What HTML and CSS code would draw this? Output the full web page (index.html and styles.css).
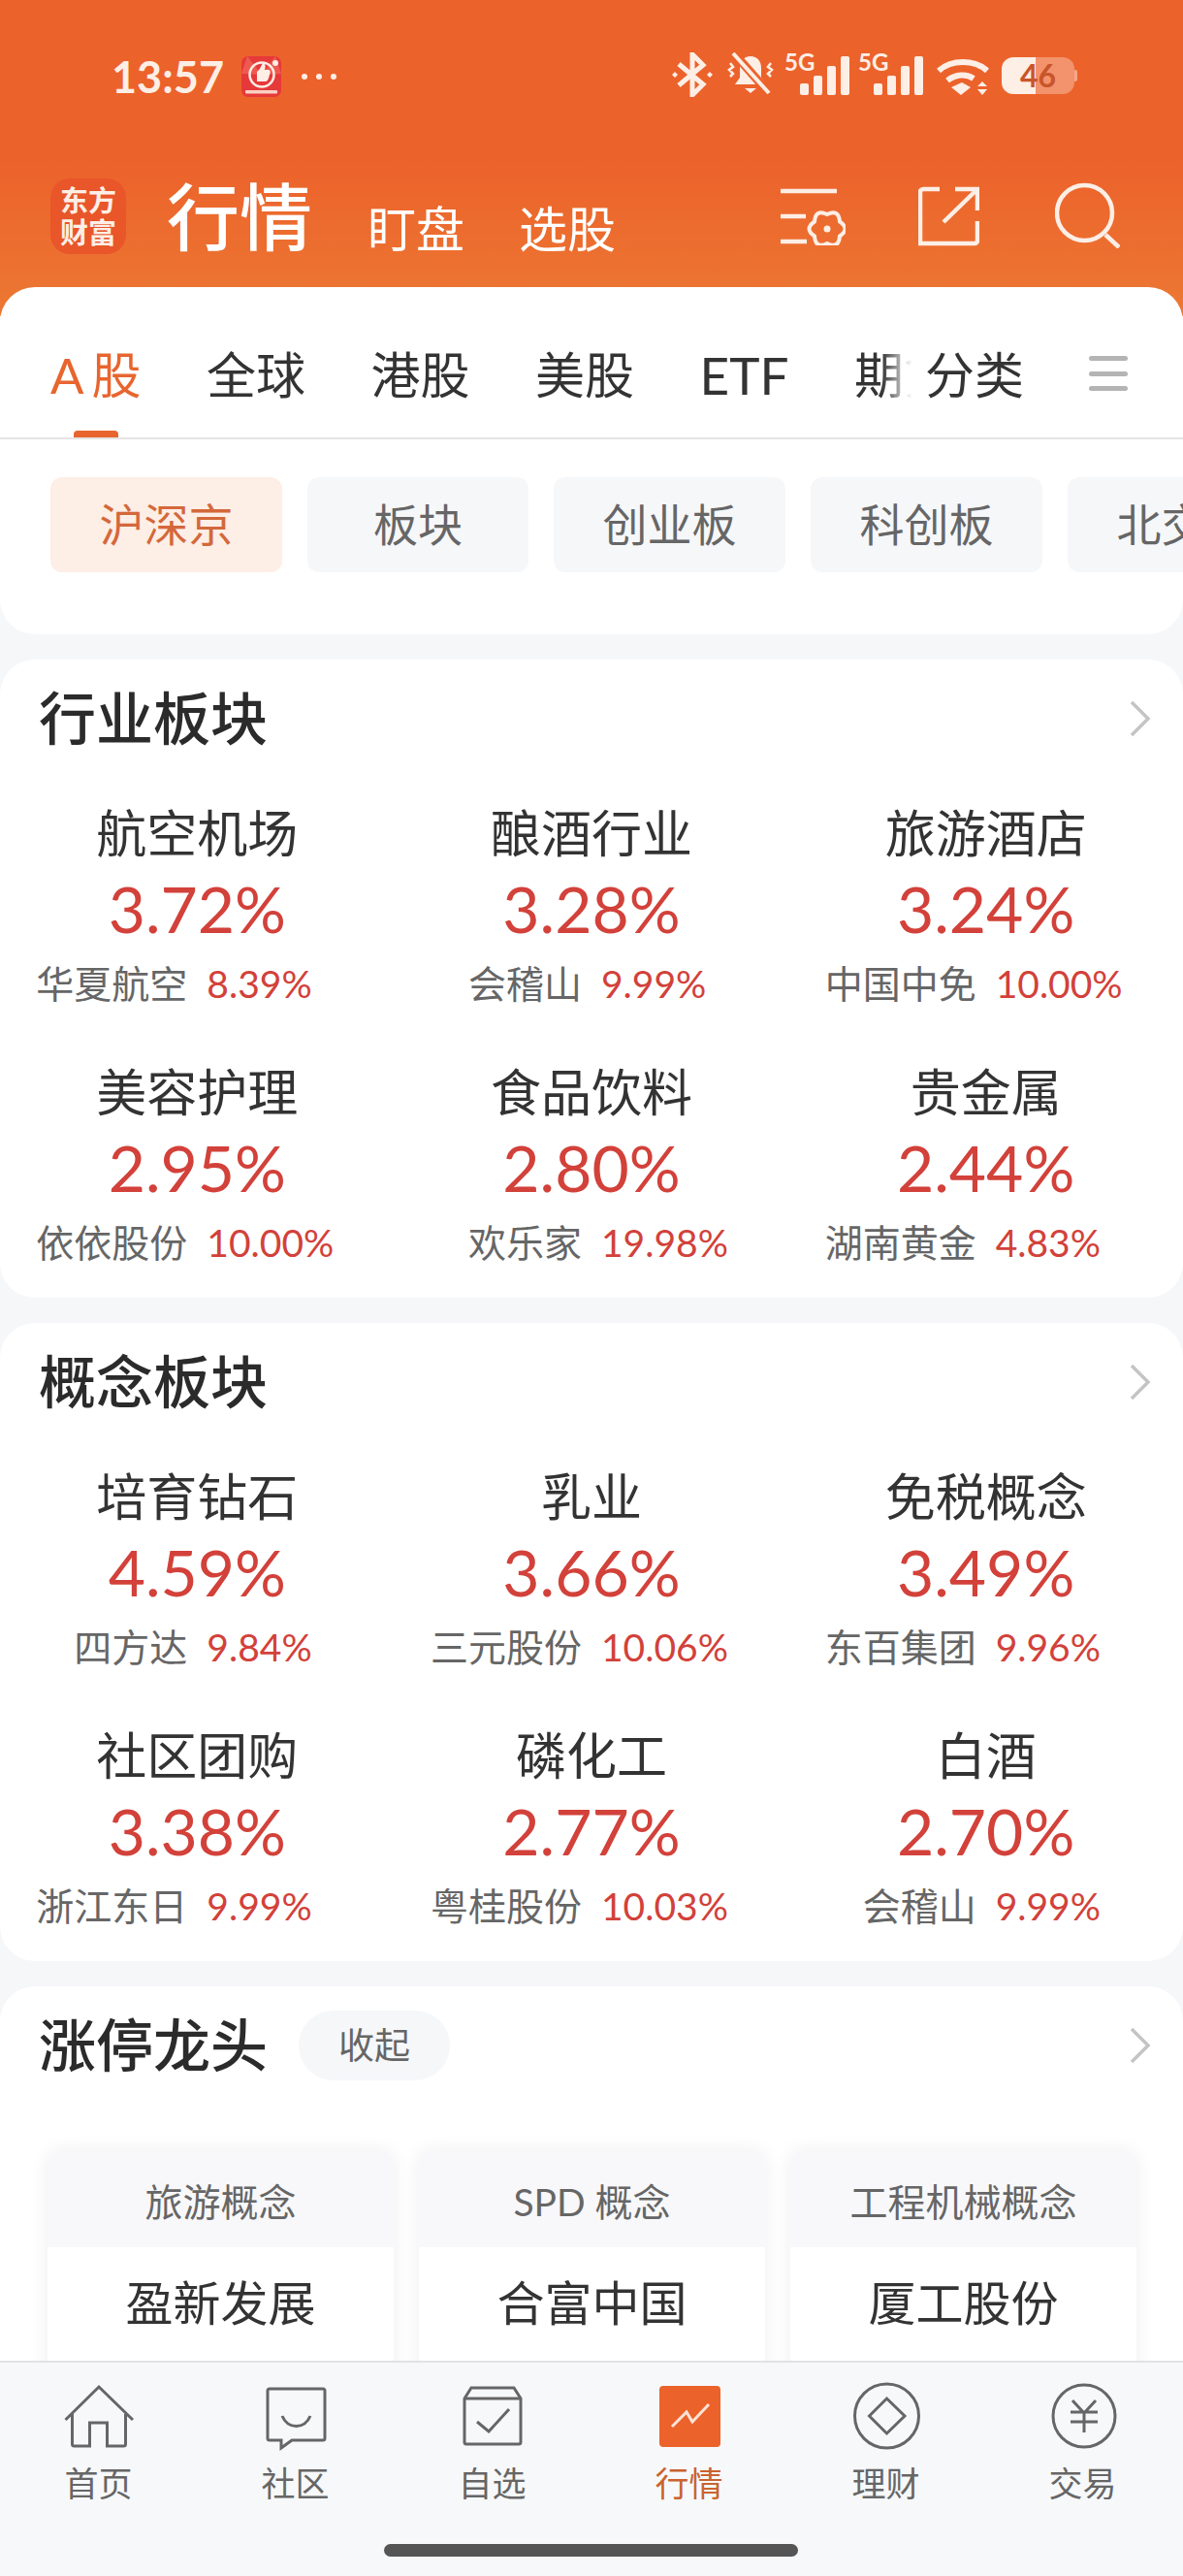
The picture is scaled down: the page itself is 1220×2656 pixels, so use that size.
FILE: index.html
```html
<!DOCTYPE html>
<html>
<head>
    <title>行情</title>
    <link rel="stylesheet" href="styles.css">
</head>
<body>
<div class="page">
    <div class="top">
        <div class="status">
            <span class="time">13:57</span>
            <svg class="app-icon" viewBox="0 0 41 42">
                <rect width="41" height="42" rx="7" fill="#e5393a"/>
                <path d="M0 18L21 19 6 0zM41 18L21 19 35 0z" fill="#ee5a50"/>
                <circle cx="21" cy="19" r="12.500" fill="none" stroke="#fdeee6" stroke-width="2.500"/>
                <path d="M16 16c3-2 4-6 6-9 3 0 3 4 2 7h4c2 0 2 3 1 5-1 4-2 7-4 7h-9z" fill="#fdeee6"/>
                <circle cx="35" cy="7" r="3" fill="#fdeee6"/>
                <rect x="4" y="35" width="33" height="3.500" rx="1" fill="#fbd0c4"/>
            </svg>
            <div class="dots"><i></i><i></i><i></i></div>
            <div class="status-right">
                <svg class="ic-bt" viewBox="0 0 42 46" fill="none" stroke="#fdeee6" stroke-width="5">
                    <path d="M7 12l25 21-11 11V2l11 11L7 34"/>
                    <path d="M0 23l3-3 3 3-3 3zM36 23l3-3 3 3-3 3z" fill="#fdeee6" stroke="none"/>
                </svg>
                <svg class="ic-bell" viewBox="0 0 52 44">
                    <path d="M26 4c-7 0-11 5-11 12v10l-5 7h32l-5-7V16c0-7-4-12-11-12z" fill="#fdeee6"/>
                    <path d="M20 37h12l-6 5z" fill="#fdeee6"/>
                    <path d="M5 11l3 4-4 3 4 4-3 3M47 11l-3 4 4 3-4 4 3 3" fill="none" stroke="#fdeee6" stroke-width="2.500"/>
                    <path d="M8 0l38 43" stroke="#ec622b" stroke-width="9"/>
                    <path d="M8 1l37 41" stroke="#fdeee6" stroke-width="4"/>
                </svg>
                <div class="signal">
                    <span class="five-g">5G</span>
                    <div class="bars"><i class="b1"></i><i class="b2"></i><i class="b3"></i><i class="b4"></i></div>
                </div>
                <div class="signal">
                    <span class="five-g">5G</span>
                    <div class="bars"><i class="b1"></i><i class="b2"></i><i class="b3"></i><i class="b4"></i></div>
                </div>
                <svg class="ic-wifi" viewBox="0 0 54 38" fill="none" stroke="#fdeee6" stroke-width="6">
                    <path d="M2 13c13-12 37-12 50 0M11 23c9-7 20-7 27-2"/>
                    <path d="M15 30l11-5 9 5-10 8z" fill="#fdeee6" stroke="none"/>
                    <path d="M42 29l5-5 5 5zM42 32l5 6 5-6z" fill="#fdeee6" stroke="none"/>
                </svg>
                <div class="battery">46</div>
            </div>
        </div>
        <div class="head">
            <div class="logo"><span>东方</span><span>财富</span></div>
            <span class="head-title">行情</span>
            <span class="head-link">盯盘</span>
            <span class="head-link">选股</span>
            <div class="head-icons">
                <svg class="ic-list" viewBox="0 0 67 60" fill="none" stroke="#fdeee6" stroke-width="4.500">
                    <path d="M0 4h58M0 30h26M0 56h27"/>
                    <path d="M48 28Q60 22.200 61 35.500 72 43 61 50.500 60 63.800 48 58 36 63.800 35 50.500 24 43 35 35.500 36 22.200 48 28z" stroke-width="4"/>
                    <circle cx="48" cy="43" r="3.500" fill="#fdeee6" stroke="none"/>
                </svg>
                <svg class="ic-share" viewBox="0 0 63 62" fill="none" stroke="#fdeee6" stroke-width="4.500">
                    <path d="M22 3H5a3 3 0 0 0-3 3v53h56a3 3 0 0 0 3-3V36M61 25V3H38M61 3L26 37"/>
                </svg>
                <svg class="ic-search" viewBox="0 0 67 68" fill="none" stroke="#fdeee6" stroke-width="4.500">
                    <circle cx="30.500" cy="31.500" r="28.500"/>
                    <path d="M52 54l14 13"/>
                </svg>
            </div>
        </div>
    </div>

    <div class="content">
        <div class="sheet">
            <div class="tabs">
                <div class="tab-list">
                    <span class="tab tab-active"><span class="tab-a">A</span>股</span>
                    <span class="tab">全球</span>
                    <span class="tab">港股</span>
                    <span class="tab">美股</span>
                    <span class="tab tab-latin">ETF</span>
                    <span class="tab">期货</span>
                </div>
                <div class="tab-side">
                    <span class="tab">分类</span>
                    <div class="burger"><i></i><i></i><i></i></div>
                </div>
            </div>
            <div class="chips">
                <span class="chip chip-active">沪深京</span>
                <span class="chip">板块</span>
                <span class="chip">创业板</span>
                <span class="chip">科创板</span>
                <span class="chip">北交所</span>
            </div>
        </div>

        <div class="card">
            <div class="card-title">
                <h2>行业板块</h2>
                <svg class="chevron" viewBox="0 0 22 38"><path d="M2 2l17 17L2 36" /></svg>
            </div>
            <div class="grid">
                <div class="cell"><div class="name">航空机场</div><div class="pct">3.72%</div><div class="sub"><span class="stock">华夏航空</span><span class="rate">8.39%</span></div></div>
                <div class="cell"><div class="name">酿酒行业</div><div class="pct">3.28%</div><div class="sub"><span class="stock">会稽山</span><span class="rate">9.99%</span></div></div>
                <div class="cell"><div class="name">旅游酒店</div><div class="pct">3.24%</div><div class="sub"><span class="stock">中国中免</span><span class="rate">10.00%</span></div></div>
                <div class="cell"><div class="name">美容护理</div><div class="pct">2.95%</div><div class="sub"><span class="stock">依依股份</span><span class="rate">10.00%</span></div></div>
                <div class="cell"><div class="name">食品饮料</div><div class="pct">2.80%</div><div class="sub"><span class="stock">欢乐家</span><span class="rate">19.98%</span></div></div>
                <div class="cell"><div class="name">贵金属</div><div class="pct">2.44%</div><div class="sub"><span class="stock">湖南黄金</span><span class="rate">4.83%</span></div></div>
            </div>
        </div>

        <div class="card">
            <div class="card-title">
                <h2>概念板块</h2>
                <svg class="chevron" viewBox="0 0 22 38"><path d="M2 2l17 17L2 36" /></svg>
            </div>
            <div class="grid">
                <div class="cell"><div class="name">培育钻石</div><div class="pct">4.59%</div><div class="sub"><span class="stock">四方达</span><span class="rate">9.84%</span></div></div>
                <div class="cell"><div class="name">乳业</div><div class="pct">3.66%</div><div class="sub"><span class="stock">三元股份</span><span class="rate">10.06%</span></div></div>
                <div class="cell"><div class="name">免税概念</div><div class="pct">3.49%</div><div class="sub"><span class="stock">东百集团</span><span class="rate">9.96%</span></div></div>
                <div class="cell"><div class="name">社区团购</div><div class="pct">3.38%</div><div class="sub"><span class="stock">浙江东日</span><span class="rate">9.99%</span></div></div>
                <div class="cell"><div class="name">磷化工</div><div class="pct">2.77%</div><div class="sub"><span class="stock">粤桂股份</span><span class="rate">10.03%</span></div></div>
                <div class="cell"><div class="name">白酒</div><div class="pct">2.70%</div><div class="sub"><span class="stock">会稽山</span><span class="rate">9.99%</span></div></div>
            </div>
        </div>

        <div class="card">
            <div class="card-title">
                <h2>涨停龙头</h2>
                <span class="pill">收起</span>
                <svg class="chevron" viewBox="0 0 22 38"><path d="M2 2l17 17L2 36" /></svg>
            </div>
            <div class="leaders">
                <div class="leader"><div class="leader-head">旅游概念</div><div class="leader-name">盈新发展</div></div>
                <div class="leader"><div class="leader-head">SPD 概念</div><div class="leader-name">合富中国</div></div>
                <div class="leader"><div class="leader-head">工程机械概念</div><div class="leader-name">厦工股份</div></div>
            </div>
        </div>
    </div>

    <div class="nav">
        <div class="nav-items">
            <div class="nav-item">
                <svg class="nav-icon" viewBox="1.500 0 70 64" fill="none" stroke="#666" stroke-width="3">
                    <path d="M2 37L36.500 3l35 34"/>
                    <path d="M9 31v31a2 2 0 0 0 2 2h16V40h18v24h17a2 2 0 0 0 2-2V31"/>
                </svg>
                <span>首页</span>
            </div>
            <div class="nav-item">
                <svg class="nav-icon" viewBox="0 0 70 64" fill="none" stroke="#666" stroke-width="3">
                    <path d="M8 5h55a2 2 0 0 1 2 2v49a2 2 0 0 1-2 2H31l-11 8v-8H8a2 2 0 0 1-2-2V7a2 2 0 0 1 2-2z"/>
                    <path d="M21 33c6 14 23 14 29 0"/>
                </svg>
                <span>社区</span>
            </div>
            <div class="nav-item">
                <svg class="nav-icon" viewBox="0 0 70 64" fill="none" stroke="#666" stroke-width="3">
                    <path d="M6 15l7-11h44l7 11v45a2 2 0 0 1-2 2H8a2 2 0 0 1-2-2z"/>
                    <path d="M6 15h58M19 39l12 10 21-23"/>
                </svg>
                <span>自选</span>
            </div>
            <div class="nav-item nav-active">
                <svg class="nav-icon" viewBox="0 0 70 64">
                    <rect x="4" y="2" width="63" height="63" rx="4" fill="#ec622b"/>
                    <path d="M17 44l15-15 6 10 17-18" fill="none" stroke="#fde3d6" stroke-width="3"/>
                </svg>
                <span>行情</span>
            </div>
            <div class="nav-item">
                <svg class="nav-icon" viewBox="0 0 70 64" fill="none" stroke="#666" stroke-width="3">
                    <circle cx="35.500" cy="33" r="33"/>
                    <path d="M35.500 15L54 33 35.500 51 17.500 33z"/>
                </svg>
                <span>理财</span>
            </div>
            <div class="nav-item">
                <svg class="nav-icon" viewBox="0 0 70 64" fill="none" stroke="#666" stroke-width="3">
                    <circle cx="36" cy="33" r="32"/>
                    <path d="M24 17l12 13 12-13M22 29h28M22 39h28M36 30v20"/>
                </svg>
                <span>交易</span>
            </div>
        </div>
        <div class="home-bar"></div>
    </div>
</div>
</body>
</html>
```

FILE: styles.css
```css
* {
    box-sizing: border-box;
}

body {
    margin: 0;
    font-family: Lato, "Noto Sans CJK SC", sans-serif;
    background-color: #f6f7f9;
    color: #333;
}

.page {
    width: 1220px;
    height: 2656px;
    display: flex;
    flex-direction: column;
    overflow: hidden;
}

.top {
    height: 326px;
    margin-bottom: -30px;
    flex-shrink: 0;
    background: linear-gradient(180deg, #ec622b 0%, #ec622b 50%, #ec7833 100%);
    color: #fdeee6;
}

/* status bar */
.status {
    height: 160px;
    padding: 51px 0 0 115px;
    display: flex;
    align-items: flex-start;
}

.time {
    font-size: 45px;
    line-height: 56px;
    font-weight: 700;
    width: 134px;
}

.app-icon {
    width: 41px;
    height: 42px;
    margin-top: 7px;
}

.dots {
    display: flex;
    gap: 9px;
    margin: 25px 0 0 21px;
}

.dots i {
    width: 6px;
    height: 6px;
    border-radius: 50%;
    background-color: #fdeee6;
}

.status-right {
    margin-left: auto;
    width: 527px;
    height: 50px;
    display: flex;
    align-items: flex-start;
}

.ic-bt {
    width: 42px;
    height: 46px;
    margin-top: 3px;
}

.ic-bell {
    width: 52px;
    height: 44px;
    margin: 3px 0 0 13px;
}

.signal {
    width: 67px;
    height: 45px;
    margin-left: 9px;
    position: relative;
}

.five-g {
    position: absolute;
    left: 0;
    top: 3px;
    font-size: 24px;
    line-height: 20px;
    font-weight: 700;
}

.bars {
    position: absolute;
    right: 0;
    bottom: -2px;
    display: flex;
    gap: 5px;
    align-items: flex-end;
}

.bars i {
    width: 9px;
    background-color: #fdeee6;
    border-radius: 2px;
}

.b1 { height: 12px; }
.b2 { height: 20px; }
.b3 { height: 30px; }
.b4 { height: 40px; }

.ic-wifi {
    width: 54px;
    height: 38px;
    margin: 9px 0 0 14px;
}

.battery {
    position: relative;
    width: 75px;
    height: 38px;
    margin: 8px 0 0 13px;
    background: linear-gradient(90deg, #fdeee6 35px, rgba(253, 238, 230, 0.35) 35px);
    border-radius: 12px;
    text-align: center;
    color: #c9552a;
    font-size: 32px;
    line-height: 38px;
    font-weight: 700;
}

.battery::after {
    content: "";
    position: absolute;
    right: -3px;
    top: 13px;
    width: 3px;
    height: 12px;
    border-radius: 0 2px 2px 0;
    background-color: rgba(253, 238, 230, 0.5);
}

/* header row */
.head {
    height: 110px;
    padding: 24px 65px 0 52px;
    display: flex;
    align-items: flex-start;
    color: #fff;
}

.logo {
    width: 78px;
    height: 78px;
    border-radius: 20px;
    background-color: #e8562a;
    display: flex;
    flex-direction: column;
    align-items: center;
    justify-content: center;
    font-size: 29px;
    line-height: 33px;
    font-weight: 700;
    color: #fdeee6;
}

.head-title {
    margin-left: 42px;
    font-size: 75px;
    line-height: 78px;
    font-weight: 500;
}

.head-link {
    margin: 22px 0 0 56px;
    font-size: 50px;
    line-height: 60px;
}

.head-title + .head-link {
    margin-left: 57px;
}

.head-icons {
    margin-left: auto;
    display: flex;
    align-items: flex-start;
    gap: 76px;
}

.ic-list {
    width: 67px;
    height: 60px;
    margin-top: 9px;
}

.ic-share {
    width: 63px;
    height: 62px;
    margin: 8px 0 0 -1px;
}

.ic-search {
    width: 67px;
    height: 68px;
    margin: 4px 0 0 2px;
}

/* scrolling part */
.content {
    flex: 1;
    min-height: 0;
    overflow: hidden;
}

.sheet {
    height: 358px;
    background-color: #fff;
    border-radius: 36px;
}

.tabs {
    height: 157px;
    border-bottom: 2px solid #e4e4e6;
    padding-left: 52px;
    display: flex;
    justify-content: space-between;
}

.tab-list {
    display: flex;
    gap: 67.500px;
    width: 898px;
    overflow: hidden;
}

.tab {
    font-size: 51px;
    line-height: 62px;
    padding-top: 60px;
    white-space: nowrap;
    color: #333;
}

.tab-a {
    margin-right: 8px;
}

.tab-latin {
    font-size: 53px;
}

.tab-active {
    color: #e8652f;
    position: relative;
    height: 155px;
}

.tab-active::after {
    content: "";
    position: absolute;
    left: 24px;
    bottom: 0;
    width: 46px;
    height: 7px;
    border-radius: 4px 4px 0 0;
    background-color: #e8652f;
}

.tab-side {
    display: flex;
    gap: 67px;
    width: 266px;
    position: relative;
}

.tab-side::before {
    content: "";
    position: absolute;
    left: -45px;
    top: 50px;
    width: 45px;
    height: 80px;
    background: linear-gradient(90deg, rgba(255,255,255,0), #fff 70%);
}

.burger {
    margin-top: 71px;
    width: 40px;
    height: 36px;
    display: flex;
    flex-direction: column;
    justify-content: space-between;
}

.burger i {
    height: 5px;
    border-radius: 3px;
    background-color: #b4b4b4;
}

.chips {
    margin-top: 39px;
    padding-left: 52px;
    display: flex;
    gap: 26px;
}

.chip {
    height: 98px;
    min-width: 228px;
    padding: 0 50.500px;
    flex-shrink: 0;
    border-radius: 12px;
    background-color: #f6f7f9;
    color: #666;
    font-size: 46px;
    line-height: 98px;
    text-align: center;
}

.chip-active {
    background-color: #fdeee6;
    color: #d4683a;
}

.card {
    margin-top: 26px;
    height: 658px;
    background-color: #fff;
    border-radius: 36px;
}

.card-title {
    height: 122px;
    padding: 0 33px 0 40px;
    display: flex;
    align-items: center;
}

.card-title h2 {
    margin: 0;
    font-size: 59px;
    line-height: 70px;
    font-weight: 500;
    color: #2b2b2b;
}

.chevron {
    width: 22px;
    height: 38px;
    margin-left: auto;
    fill: none;
    stroke: #c4c4c6;
    stroke-width: 3.500;
}

.grid {
    display: grid;
    grid-template-columns: repeat(3, 1fr);
    grid-auto-rows: 267px;
}

.cell {
    padding-top: 27px;
    text-align: center;
}

.name {
    font-size: 52px;
    line-height: 60px;
    color: #333;
}

.pct {
    font-size: 66px;
    line-height: 96px;
    color: #d2413a;
}

.sub {
    margin-top: 5px;
    display: grid;
    grid-template-columns: 1fr 1fr;
    column-gap: 20px;
    font-size: 39px;
    line-height: 48px;
    white-space: nowrap;
}

.stock {
    text-align: right;
    color: #666;
}

.rate {
    text-align: left;
    color: #d2413a;
}

.pill {
    margin-left: 32px;
    width: 156px;
    height: 72px;
    border-radius: 36px;
    background-color: #f6f7f9;
    color: #666;
    font-size: 37px;
    line-height: 72px;
    text-align: center;
}

.leaders {
    margin-top: 48px;
    padding: 0 49px;
    display: grid;
    grid-template-columns: repeat(3, 357px);
    column-gap: 26px;
}

.leader {
    background-color: #fff;
    border-radius: 12px 12px 0 0;
    box-shadow: 0 0 20px rgba(0, 0, 0, 0.07);
    height: 300px;
}

.leader-head {
    height: 99px;
    background-color: #f8f8fa;
    border-radius: 12px 12px 0 0;
    text-align: center;
    color: #666;
    font-size: 39px;
    line-height: 104px;
}

.leader-name {
    text-align: center;
    color: #333;
    font-size: 49px;
    line-height: 114px;
}

/* bottom nav */
.nav {
    position: relative;
    height: 222px;
    flex-shrink: 0;
    background-color: #f7f8fa;
    border-top: 2px solid #e2e2e4;
}

.nav-items {
    display: grid;
    grid-template-columns: repeat(6, 203px);
    padding-top: 22px;
}

.nav-item {
    display: flex;
    flex-direction: column;
    align-items: center;
    color: #666;
    font-size: 35px;
    line-height: 46px;
}

.nav-icon {
    width: 70px;
    height: 64px;
    margin-bottom: 15px;
    overflow: visible;
}

.nav-active {
    color: #c9632f;
}

.home-bar {
    position: absolute;
    left: 396px;
    bottom: 20px;
    width: 427px;
    height: 13px;
    border-radius: 7px;
    background-color: #555;
}
```
